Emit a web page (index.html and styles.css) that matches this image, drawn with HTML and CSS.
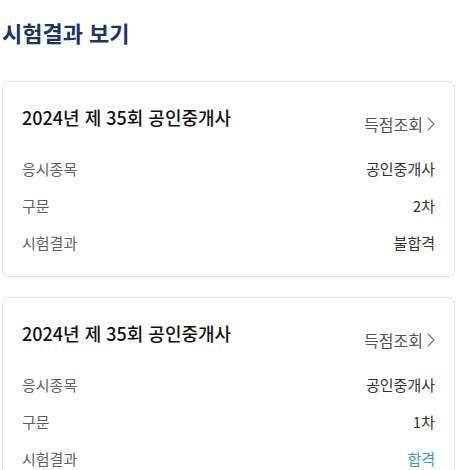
FILE: index.html
```html
<!DOCTYPE html>
<html lang="ko">
<head>
  <meta charset="UTF-8">
  <title>시험결과 보기</title>
  <link rel="stylesheet" href="styles.css">
</head>
<body>

  <h1 class="page-title">시험결과 보기</h1>

  <div class="result-list">
    <div class="result-card">
      <div class="card-head">
        <h2 class="exam-name">2024년 제 35회 공인중개사</h2>
        <a class="score-link" href="#">득점조회
          <svg width="8" height="14" viewBox="0 0 8 14"><path d="M1 1l6 6-6 6" fill="none" stroke="#777" stroke-width="1.2"/></svg>
        </a>
      </div>
      <dl class="info">
        <div class="info-row"><dt>응시종목</dt><dd>공인중개사</dd></div>
        <div class="info-row"><dt>구문</dt><dd>2차</dd></div>
        <div class="info-row"><dt>시험결과</dt><dd>불합격</dd></div>
      </dl>
    </div>

    <div class="result-card">
      <div class="card-head">
        <h2 class="exam-name">2024년 제 35회 공인중개사</h2>
        <a class="score-link" href="#">득점조회
          <svg width="8" height="14" viewBox="0 0 8 14"><path d="M1 1l6 6-6 6" fill="none" stroke="#777" stroke-width="1.2"/></svg>
        </a>
      </div>
      <dl class="info">
        <div class="info-row"><dt>응시종목</dt><dd>공인중개사</dd></div>
        <div class="info-row"><dt>구문</dt><dd>1차</dd></div>
        <div class="info-row"><dt>시험결과</dt><dd class="pass">합격</dd></div>
      </dl>
    </div>
  </div>

</body>
</html>
```

FILE: styles.css
```css
body {
  margin: 0;
  padding: 0 19px 0 2px;
  font-family: "Noto Sans CJK KR", "Noto Sans", sans-serif;
  background: #fff;
  color: #333;
}

.page-title {
  margin: 17px 0 34px;
  font-size: 22px;
  line-height: 30px;
  font-weight: 700;
  color: #1b3564;
}

.result-list {
  display: flex;
  flex-direction: column;
  gap: 20px;
}

.result-card {
  border: 1px solid #e2e2e2;
  border-radius: 7px;
  padding: 22px 19px;
  background: #fff;
  box-shadow: 0 1px 3px rgba(0,0,0,0.04);
}

.card-head {
  display: flex;
  justify-content: space-between;
  align-items: flex-start;
  height: 31px;
  margin-bottom: 23px;
}

.exam-name {
  margin: 0;
  font-size: 18px;
  line-height: 26px;
  font-weight: 500;
  color: #111;
}

.score-link {
  display: flex;
  align-items: center;
  gap: 4px;
  margin-top: 9px;
  font-size: 16px;
  line-height: 22px;
  color: #555;
  text-decoration: none;
}

.info {
  margin: 0;
  display: flex;
  flex-direction: column;
  gap: 15px;
}

.info-row {
  display: flex;
  justify-content: space-between;
  font-size: 15px;
  line-height: 22px;
}

.info-row dt {
  color: #5f5f5f;
}

.info-row dd {
  margin: 0;
  color: #333;
}

.info-row .pass {
  color: #2a9dcc;
}
```
